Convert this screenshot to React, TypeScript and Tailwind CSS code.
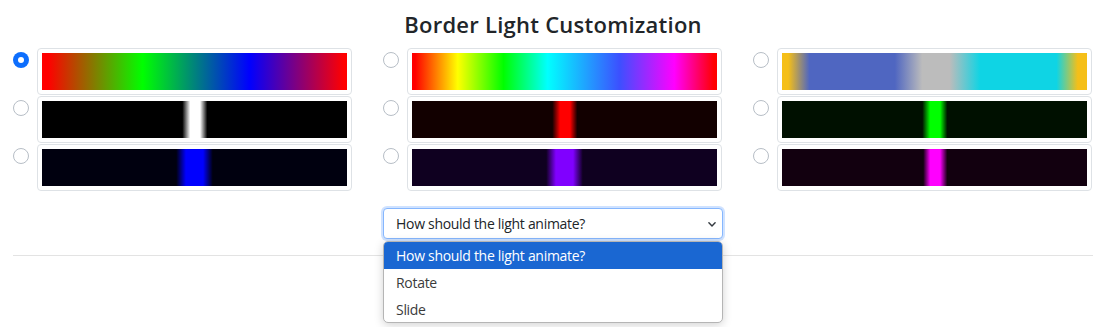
import React from 'react';

type Swatch = { bg: string; selected?: boolean };

// each column holds three light presets, top to bottom
const columns: Swatch[][] = [
  [
    { bg: 'linear-gradient(90deg, #ff0000 2%, #00ff00 33%, #0000ff 68%, #ff0000 99%)', selected: true },
    { bg: 'linear-gradient(90deg, #000 46%, #fff 48.6%, #fff 51.8%, #000 54.2%)' },
    { bg: 'linear-gradient(90deg, #00000f 44%, #0000ff 47.2%, #0000ff 52.8%, #00000f 56%)' },
  ],
  [
    { bg: 'linear-gradient(90deg, #ff0000 1%, #ffff00 15%, #00ff00 30%, #00ffff 44.5%, #3c50ff 68%, #ff00ff 86%, #ff0000 99%)' },
    { bg: 'linear-gradient(90deg, #120000 46%, #ff0000 48.6%, #ff0000 51.8%, #120000 54.2%)' },
    { bg: 'linear-gradient(90deg, #0f0020 44%, #8000ff 47.2%, #8000ff 52.8%, #0f0020 56%)' },
  ],
  [
    { bg: 'linear-gradient(90deg, #f5bf18 2%, #4f66c1 9%, #4f66c1 37%, #bcbcbc 46%, #bcbcbc 55%, #0fd4e4 65%, #0fd4e4 90%, #f5bf18 97%)' },
    { bg: 'linear-gradient(90deg, #001000 46%, #00ff00 48.6%, #00ff00 51.8%, #001000 54.2%)' },
    { bg: 'linear-gradient(90deg, #12000f 46.3%, #ff00ff 48.6%, #ff00ff 51.8%, #12000f 54.2%)' },
  ],
];

const Radio: React.FC<{ checked?: boolean }> = ({ checked }) =>
  checked ? (
    <span className="mt-1 flex h-4 w-4 shrink-0 items-center justify-center rounded-full bg-[#0d6efd]">
      <span className="h-[6px] w-[6px] rounded-full bg-white" />
    </span>
  ) : (
    <span className="mt-1 h-4 w-4 shrink-0 rounded-full border border-[#b7bec6] bg-white" />
  );

const App: React.FC = () => {
  return (
    <div className="relative h-[327px] w-full overflow-hidden bg-white font-['Open_Sans',sans-serif] text-[#212529]">
      <h3 className="pl-[13px] pr-[16px] pt-[10px] text-center text-[22px] font-semibold leading-[28px] tracking-[0.25px]">
        Border Light Customization
      </h3>

      {/* Presets */}
      <div className="mt-[10px] grid grid-cols-[370px_370px_369px]">
        {columns.map((col, ci) => (
          <div key={ci} className="flex flex-col gap-px">
            {col.map((s, ri) => (
              <div key={ri} className="flex items-start pl-[12.5px]">
                <Radio checked={s.selected} />
                <div className="ml-[8.5px] w-[315px] rounded-[4px] border border-[#dee2e6] p-1">
                  <div className="h-[37px] w-full" style={{ background: s.bg }} />
                </div>
              </div>
            ))}
          </div>
        ))}
      </div>

      <div className="pl-[13px] pr-[16px]">
        {/* Animation select */}
        <div className="mx-auto mt-[17px] flex h-[31px] w-[340px] items-center justify-between rounded-[4px] border border-[#86b7fe] bg-white pl-[12px] pr-[4px] text-[14px] tracking-[-0.3px] text-[#212529] shadow-[0_0_0_2px_rgba(13,110,253,0.2)]">
          <span>How should the light animate?</span>
          <svg width="12" height="9" viewBox="0 0 16 16" className="mt-px">
            <path d="M2.5 5l5.5 5.5 5.5-5.5" fill="none" stroke="#343a40" strokeWidth="2.6" strokeLinecap="round" strokeLinejoin="round" />
          </svg>
        </div>

        <hr className="mt-[16px] border-t border-[#e3e3e3]" />
      </div>

      {/* Open option list */}
      <div className="absolute left-[383px] top-[241px] w-[340px] overflow-hidden rounded-[5px] border border-[#b5b5b5] bg-white text-[14px] tracking-[-0.3px] shadow-[0_2px_10px_rgba(0,0,0,0.18)]">
        <div className="flex h-[27px] items-center bg-[#1a67d2] pl-[12px] text-white">How should the light animate?</div>
        <div className="flex h-[27px] items-center pl-[12px] text-[#3b3b3b]">Rotate</div>
        <div className="flex h-[26px] items-center pl-[12px] text-[#3b3b3b]">Slide</div>
      </div>
    </div>
  );
};

export default App;
